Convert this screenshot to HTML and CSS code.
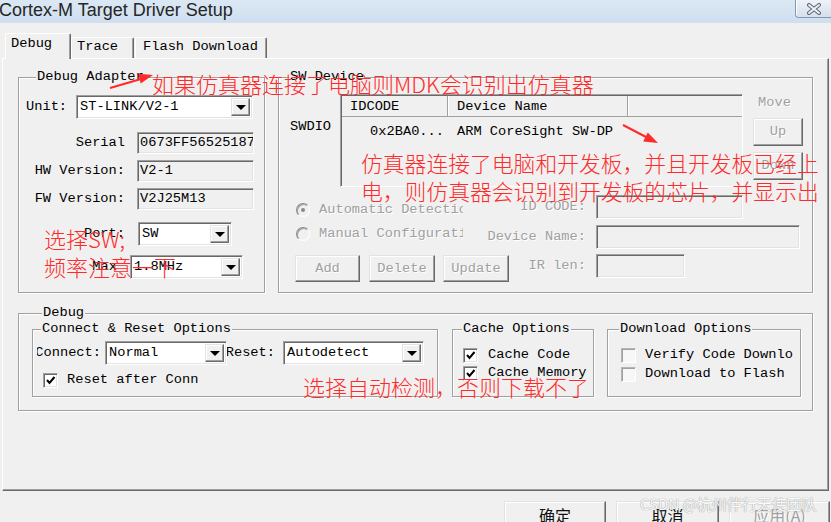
FILE: index.html
```html
<!DOCTYPE html>
<html lang="zh-CN">
<head>
  <meta charset="UTF-8">
  <meta name="viewport" content="width=device-width, initial-scale=1.0">
  <title>Cortex-M Target Driver Setup</title>
  <link rel="stylesheet" href="styles.css">
</head>
<body>

<!-- Title bar -->
<div class="titlebar">
  <span class="title">Cortex-M Target Driver Setup</span>
  <span class="close-btn">
    <svg width="16" height="12" viewBox="0 0 16 12">
      <path d="M3 2 L13 10 M13 2 L3 10" stroke="#5f6673" stroke-width="4" stroke-linecap="round"/>
      <path d="M3 2 L13 10 M13 2 L3 10" stroke="#eef1f5" stroke-width="2" stroke-linecap="round"/>
    </svg>
  </span>
</div>

<!-- Tabs -->
<div class="tabs">
  <div class="tab tab-debug">Debug</div>
  <div class="tab tab-trace">Trace</div>
  <div class="tab tab-flash">Flash Download</div>
</div>

<div class="pane">
  <div class="top-row">

    <!-- Debug Adapter -->
    <div class="group adapter">
      <div class="legend">Debug Adapter</div>
      <div class="row unit-row">
        <span class="unit-label">Unit:</span>
        <div class="select unit-select"><span class="select-text">ST-LINK/V2-1</span><span class="drop"></span></div>
      </div>
      <div class="row info-row serial-row">
        <span class="info-label">Serial</span>
        <div class="field info-field">0673FF565251878828</div>
      </div>
      <div class="row info-row">
        <span class="info-label">HW Version:</span>
        <div class="field info-field">V2-1</div>
      </div>
      <div class="row info-row">
        <span class="info-label">FW Version:</span>
        <div class="field info-field">V2J25M13</div>
      </div>
      <div class="row port-row">
        <span class="info-label">Port:</span>
        <div class="select port-select"><span class="select-text">SW</span><span class="drop"></span></div>
      </div>
      <div class="row max-row">
        <span class="info-label max-label">Max</span>
        <div class="select max-select"><span class="select-text">1.8MHz</span><span class="drop"></span></div>
      </div>
    </div>

    <!-- SW Device -->
    <div class="group sw-device">
      <div class="legend">SW Device</div>
      <div class="sw-top">
        <span class="swdio">SWDIO</span>
        <div class="devices">
          <div class="dev-head">
            <span class="hc hc-id">IDCODE</span>
            <span class="hc hc-name">Device Name</span>
            <span class="hc hc-rest"></span>
          </div>
          <div class="dev-row">
            <span class="dc-id">0x2BA0...</span>
            <span class="dc-name">ARM CoreSight SW-DP</span>
          </div>
        </div>
        <div class="move">
          <div class="move-label disabled">Move</div>
          <div class="btn move-btn disabled">Up</div>
          <div class="btn move-btn down-btn disabled">Down</div>
        </div>
      </div>
      <div class="sw-bottom">
        <div class="sw-left">
          <div class="radio-row"><span class="radio on"></span><span class="radio-text disabled">Automatic Detection</span></div>
          <div class="radio-row"><span class="radio"></span><span class="radio-text disabled">Manual Configuration</span></div>
          <div class="sw-buttons">
            <div class="btn btn-add disabled">Add</div>
            <div class="btn btn-delete disabled">Delete</div>
            <div class="btn btn-update disabled">Update</div>
          </div>
        </div>
        <div class="sw-right">
          <div class="row cfg-row">
            <span class="cfg-label disabled">ID CODE:</span>
            <div class="field cfg-id"></div>
          </div>
          <div class="row cfg-row cfg-row2">
            <span class="cfg-label disabled">Device Name:</span>
            <div class="field cfg-name"></div>
          </div>
          <div class="row cfg-row cfg-row3">
            <span class="cfg-label disabled">IR len:</span>
            <div class="field cfg-ir"></div>
          </div>
        </div>
      </div>
    </div>
  </div>

  <!-- Debug -->
  <div class="group debug">
    <div class="legend">Debug</div>
    <div class="debug-row">
      <div class="group connect">
        <div class="legend connect-legend">Connect &amp; Reset Options</div>
        <div class="row cr-row">
          <span class="cut-label connect-label"><span>Connect:</span></span>
          <div class="select connect-select"><span class="select-text">Normal</span><span class="drop"></span></div>
          <span class="cut-label reset-label"><span>Reset:</span></span>
          <div class="select reset-select"><span class="select-text">Autodetect</span><span class="drop"></span></div>
        </div>
        <div class="check-row cr-check">
          <span class="check on"></span><span class="check-text">Reset after Conn</span>
        </div>
      </div>

      <div class="group cache">
        <div class="legend cache-legend">Cache Options</div>
        <div class="check-row first-check">
          <span class="check on"></span><span class="check-text">Cache Code</span>
        </div>
        <div class="check-row second-check">
          <span class="check on"></span><span class="check-text">Cache Memory</span>
        </div>
      </div>

      <div class="group download">
        <div class="legend download-legend">Download Options</div>
        <div class="check-row first-check">
          <span class="check"></span><span class="check-text">Verify Code Downlo</span>
        </div>
        <div class="check-row second-check dl-second">
          <span class="check"></span><span class="check-text">Download to Flash</span>
        </div>
      </div>
    </div>
  </div>
</div>

<!-- Dialog buttons -->
<div class="dialog-buttons">
  <div class="btn dlg-btn ok-btn">确定</div>
  <div class="btn dlg-btn cancel-btn">取消</div>
  <div class="btn dlg-btn apply-btn disabled">应用(A)</div>
</div>

<!-- Red notes drawn over the screenshot -->
<svg class="marks" width="831" height="522" viewBox="0 0 831 522">
  <line x1="110" y1="88" x2="141" y2="79" stroke="#ff2a2a" stroke-width="2"/>
  <polygon points="153,75 140.7,83.4 138.3,73.8" fill="#ff2a2a"/>
  <line x1="623" y1="125" x2="647" y2="137.5" stroke="#ff2a2a" stroke-width="2"/>
  <polygon points="658,143 643.2,141.4 647.8,132.4" fill="#ff2a2a"/>
</svg>

<div class="note note-adapter">如果仿真器连接了电脑则MDK会识别出仿真器</div>
<div class="note note-chip">仿真器连接了电脑和开发板，并且开发板已经上<br>电，则仿真器会识别到开发板的芯片，并显示出</div>
<div class="note note-sw">选择SW;<br>频率注意一下</div>
<div class="note note-reset">选择自动检测，否则下载不了</div>

<div class="watermark">CSDN @杭州伴行天使团队</div>

</body>
</html>
```

FILE: styles.css
```css
* {
  box-sizing: border-box;
}

body {
  margin: 0;
  width: 831px;
  height: 522px;
  overflow: hidden;
  position: relative;
  background-color: #f0f0f0;
  font-family: "Liberation Mono", "DejaVu Sans Mono", monospace;
  font-size: 13.7px;
  line-height: 16px;
  color: #000;
}

.disabled {
  color: #a0a0a0;
  text-shadow: 1px 1px 0 #fff;
}

/* Title bar */
.titlebar {
  height: 23px;
  display: flex;
  align-items: flex-start;
  background: linear-gradient(#dbe7f4, #cfdff0);
}

.title {
  font-family: "Liberation Sans", Arial, sans-serif;
  font-size: 18px;
  line-height: 20px;
  margin-left: -1px;
  color: #262626;
}

.close-btn {
  margin-left: auto;
  width: 36px;
  height: 18px;
  border: 1px solid #8797ab;
  border-top: none;
  border-right: none;
  border-radius: 0 0 0 4px;
  background: linear-gradient(#eef3f9, #d3dfec);
  box-shadow: inset 1px 0 0 #fff;
  display: flex;
  align-items: center;
  justify-content: center;
}

/* Tabs */
.tabs {
  height: 35px;
  display: flex;
  align-items: flex-end;
  padding-left: 5px;
  position: relative;
  z-index: 1;
}

.tab {
  height: 21px;
  border: 1px solid #fff;
  border-bottom: none;
  border-right-color: #696969;
  border-radius: 2px 2px 0 0;
  box-shadow: inset -1px 0 0 #a0a0a0;
  padding: 1px 0 0 5px;
  white-space: nowrap;
  background-color: #f0f0f0;
}

.tab-debug {
  width: 66px;
  height: 26px;
  margin-bottom: -1px;
  padding-top: 2px;
}

.tab-trace {
  width: 63px;
}

.tab-flash {
  width: 132px;
  margin-left: 1px;
  padding-left: 7px;
}

/* Tab page */
.pane {
  margin-left: 2px;
  width: 827px;
  height: 433px;
  border: 1px solid #fff;
  border-right-color: #696969;
  border-bottom-color: #696969;
  box-shadow: inset -1px -1px 0 #a0a0a0;
  padding: 18px 0 0 15px;
}

.top-row {
  display: flex;
  gap: 13px;
}

.group {
  display: flex;
  flex-direction: column;
  border: 1px solid #a0a0a0;
  box-shadow: inset 1px 1px 0 #fff, 1px 1px 0 #fff;
}

.legend {
  align-self: flex-start;
  margin: -9px 0 -7px 10px;
  padding: 0 1px;
  height: 16px;
  background-color: #f0f0f0;
  white-space: nowrap;
}

.row {
  display: flex;
  align-items: center;
}

/* Debug Adapter */
.adapter {
  width: 247px;
  height: 216px;
  padding-left: 7px;
}

.unit-row {
  margin-top: 17px;
  height: 24px;
}

.unit-label {
  width: 50px;
}

.unit-select {
  width: 177px;
  height: 24px;
}

.info-row {
  height: 22px;
  margin-top: 6px;
}

.serial-row {
  margin-top: 13px;
}

.info-label {
  width: 99px;
  text-align: right;
  white-space: nowrap;
}

.info-field {
  margin-left: 12px;
  width: 117px;
  height: 22px;
}

.port-row {
  margin-top: 12px;
  height: 24px;
}

.max-row {
  margin-top: 9px;
  height: 24px;
}

.max-label {
  padding-right: 8px;
  margin-right: -8px;
}

.port-select {
  margin-left: 13px;
  width: 94px;
  height: 24px;
}

.max-select {
  margin-left: 13px;
  width: 113px;
  height: 24px;
}

/* Inputs */
.select {
  display: flex;
  background-color: #fff;
  border: 1px solid;
  border-color: #a0a0a0 #fff #fff #a0a0a0;
  box-shadow: inset 1px 1px 0 #696969, inset -1px -1px 0 #e3e3e3;
  padding: 2px 2px 2px 3px;
}

.select-text {
  flex: 1;
  align-self: center;
  white-space: nowrap;
  overflow: hidden;
}

.drop {
  width: 19px;
  display: flex;
  align-items: center;
  justify-content: center;
  background-color: #f0f0f0;
  border: 1px solid;
  border-color: #e3e3e3 #696969 #696969 #e3e3e3;
  box-shadow: inset -1px -1px 0 #a0a0a0, inset 1px 1px 0 #fff;
}

.drop::after {
  content: '';
  border-left: 5px solid transparent;
  border-right: 5px solid transparent;
  border-top: 5px solid #000;
  margin-top: 1px;
}

.field {
  display: flex;
  align-items: center;
  background-color: #f0f0f0;
  border: 1px solid;
  border-color: #a0a0a0 #fff #fff #a0a0a0;
  box-shadow: inset 1px 1px 0 #696969, inset -1px -1px 0 #e3e3e3;
  padding: 0 2px;
  white-space: nowrap;
  overflow: hidden;
}

.btn {
  display: flex;
  align-items: center;
  justify-content: center;
  background-color: #f0f0f0;
  border: 1px solid;
  border-color: #e3e3e3 #696969 #696969 #e3e3e3;
  box-shadow: inset -1px -1px 0 #a0a0a0, inset 1px 1px 0 #fff;
  white-space: nowrap;
}

/* SW Device */
.sw-device {
  width: 535px;
  height: 216px;
}

.sw-top {
  margin-top: 16px;
  display: flex;
  align-items: flex-start;
}

.swdio {
  width: 61px;
  padding: 25px 0 0 11px;
}

.devices {
  width: 403px;
  height: 93px;
  border: 1px solid;
  border-color: #a0a0a0 #fff #fff #a0a0a0;
  box-shadow: inset 1px 1px 0 #696969;
  padding: 1px 0 0 1px;
}

.dev-head {
  display: flex;
  height: 21px;
  border-bottom: 1px solid #a0a0a0;
}

.hc {
  display: flex;
  align-items: center;
  padding: 2px 0 0 8px;
  border-right: 1px solid #a0a0a0;
  box-shadow: 1px 0 0 #fff;
}

.hc-id {
  width: 106px;
}

.hc-name {
  width: 180px;
  padding-left: 9px;
}

.hc-rest {
  flex: 1;
  border-right: none;
}

.dev-row {
  display: flex;
  padding-top: 7px;
}

.dc-id {
  width: 106px;
  text-align: right;
  padding-right: 4px;
}

.dc-name {
  padding-left: 9px;
}

.move {
  margin-left: 10px;
  width: 50px;
}

.move-label {
  margin-top: 1px;
  padding-left: 5px;
}

.move-btn {
  margin-top: 7px;
  height: 28px;
}

.down-btn {
  margin-top: 6px;
}

.sw-bottom {
  display: flex;
  margin-top: 8px;
}

.sw-left {
  width: 231px;
  padding: 3px 0 0 16px;
}

.radio-row {
  display: flex;
  align-items: center;
  height: 24px;
}

.radio {
  width: 14px;
  height: 14px;
  margin-left: 1px;
  border-radius: 50%;
  border: 1px solid;
  border-color: #8a8a8a #fff #fff #8a8a8a;
  box-shadow: inset 1px 1px 0 #a0a0a0;
  background-color: #f0f0f0;
  display: flex;
  align-items: center;
  justify-content: center;
}

.radio.on::after {
  content: '';
  width: 4px;
  height: 4px;
  border-radius: 50%;
  background-color: #8a8a8a;
}

.radio-text {
  margin-left: 9px;
  width: 144px;
  overflow: hidden;
  white-space: nowrap;
}

.sw-buttons {
  display: flex;
  margin-top: 9px;
}

.sw-buttons .btn {
  height: 27px;
}

.btn-add {
  width: 65px;
}

.btn-delete {
  width: 66px;
  margin-left: 9px;
}

.btn-update {
  width: 66px;
  margin-left: 8px;
}

.cfg-row {
  height: 24px;
}

.cfg-row2 {
  margin-top: 6px;
}

.cfg-row3 {
  margin-top: 5px;
}

.cfg-label {
  width: 76px;
  text-align: right;
  white-space: nowrap;
  display: flex;
  justify-content: flex-end;
}

.cfg-row .field {
  margin-left: 10px;
  height: 24px;
}

.cfg-id {
  width: 147px;
}

.cfg-name {
  width: 204px;
}

.cfg-ir {
  width: 89px;
}

/* Debug */
.debug {
  margin-top: 20px;
  width: 795px;
  padding: 0 0 13px 13px;
}

.debug-row {
  display: flex;
  margin-top: 15px;
}

.debug-row .group {
  height: 68px;
}

.connect {
  width: 406px;
}

.connect-legend {
  margin-left: 8px;
}

.cr-row {
  margin-top: 11px;
  height: 24px;
}

.cut-label {
  display: flex;
  justify-content: flex-end;
  overflow: hidden;
  white-space: nowrap;
}

.connect-label {
  margin-left: 4px;
  width: 66px;
  padding-right: 2px;
}

.connect-select {
  margin-left: 2px;
  width: 122px;
  height: 24px;
}

.reset-label {
  width: 54px;
  padding-right: 6px;
}

.reset-select {
  margin-left: 2px;
  width: 141px;
  height: 24px;
}

.check-row {
  display: flex;
  align-items: center;
  height: 16px;
}

.cr-check {
  margin-top: 7px;
  padding-left: 10px;
}

.check {
  width: 15px;
  height: 15px;
  flex-shrink: 0;
  background-color: #fff;
  border: 1px solid;
  border-color: #a0a0a0 #fff #fff #a0a0a0;
  box-shadow: inset 1px 1px 0 #696969, inset -1px -1px 0 #e3e3e3;
}

.download .check {
  background-color: #f7f7f7;
  border-color: #b4b4b4 #fff #fff #b4b4b4;
  box-shadow: inset 1px 1px 0 #a0a0a0;
}

.check.on {
  background: #fff url("data:image/svg+xml,%3Csvg xmlns='http://www.w3.org/2000/svg' width='13' height='13'%3E%3Cpath d='M3 6 L5.5 9 L10.5 3' fill='none' stroke='%23000' stroke-width='2'/%3E%3C/svg%3E") center no-repeat;
}

.check-text {
  margin-left: 9px;
  white-space: nowrap;
}

.cache {
  margin-left: 14px;
  width: 142px;
}

.cache-legend {
  margin-left: 9px;
}

.first-check {
  margin-top: 17px;
}

.second-check {
  margin-top: 2px;
}

.cache .check-row {
  padding-left: 10px;
}

.cache .check-text {
  margin-left: 10px;
}

.download {
  margin-left: 13px;
  width: 194px;
}

.download-legend {
  margin-left: 11px;
}

.download .check-row {
  padding-left: 13px;
}

.dl-second {
  margin-top: 3px;
}

/* Dialog buttons */
.dialog-buttons {
  display: flex;
  justify-content: flex-end;
  gap: 10px;
  margin-top: 10px;
  padding-right: 1px;
}

.dlg-btn {
  height: 28px;
  font-family: "Noto Sans CJK SC", sans-serif;
  font-size: 16px;
  color: #111;
}

.ok-btn {
  width: 102px;
}

.cancel-btn {
  width: 103px;
}

.apply-btn {
  width: 101px;
  color: #a0a0a0;
}

/* Annotations */
.marks {
  position: absolute;
  top: 0;
  left: 0;
  pointer-events: none;
}

.note {
  position: absolute;
  font-family: "Noto Sans CJK SC", sans-serif;
  font-size: 22px;
  font-weight: 300;
  line-height: 28px;
  color: #ff2a2a;
  white-space: nowrap;
}

.note-adapter {
  left: 152px;
  top: 69px;
}

.note-chip {
  left: 361px;
  top: 149px;
  font-size: 21.8px;
}

.note-sw {
  left: 44px;
  top: 224px;
}

.note-reset {
  left: 303px;
  top: 372px;
}

.watermark {
  position: absolute;
  left: 640px;
  top: 494px;
  font-family: "Noto Sans CJK SC", sans-serif;
  font-size: 15px;
  line-height: 20px;
  color: #fafafa;
  text-shadow: 0 0 1px #9a9a9a, 0 0 1px #aaa;
  white-space: nowrap;
}
```
